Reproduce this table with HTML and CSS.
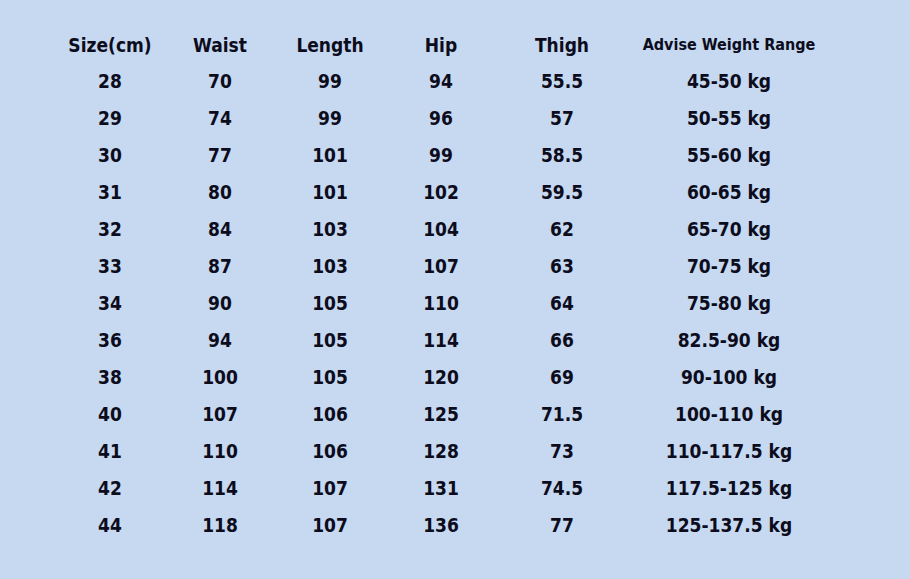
FILE: index.html
```html
<!DOCTYPE html>
<html lang="en">
<head>
<meta charset="utf-8">
<title>Size Chart</title>
<link rel="stylesheet" href="styles.css">
</head>
<body>
<div class="chart">
  <div class="row head">
    <div>Size(cm)</div><div>Waist</div><div>Length</div><div>Hip</div><div>Thigh</div><div class="small">Advise Weight Range</div>
  </div>
  <div class="row"><div>28</div><div>70</div><div>99</div><div>94</div><div>55.5</div><div>45-50 kg</div></div>
  <div class="row"><div>29</div><div>74</div><div>99</div><div>96</div><div>57</div><div>50-55 kg</div></div>
  <div class="row"><div>30</div><div>77</div><div>101</div><div>99</div><div>58.5</div><div>55-60 kg</div></div>
  <div class="row"><div>31</div><div>80</div><div>101</div><div>102</div><div>59.5</div><div>60-65 kg</div></div>
  <div class="row"><div>32</div><div>84</div><div>103</div><div>104</div><div>62</div><div>65-70 kg</div></div>
  <div class="row"><div>33</div><div>87</div><div>103</div><div>107</div><div>63</div><div>70-75 kg</div></div>
  <div class="row"><div>34</div><div>90</div><div>105</div><div>110</div><div>64</div><div>75-80 kg</div></div>
  <div class="row"><div>36</div><div>94</div><div>105</div><div>114</div><div>66</div><div>82.5-90 kg</div></div>
  <div class="row"><div>38</div><div>100</div><div>105</div><div>120</div><div>69</div><div>90-100 kg</div></div>
  <div class="row"><div>40</div><div>107</div><div>106</div><div>125</div><div>71.5</div><div>100-110 kg</div></div>
  <div class="row"><div>41</div><div>110</div><div>106</div><div>128</div><div>73</div><div>110-117.5 kg</div></div>
  <div class="row"><div>42</div><div>114</div><div>107</div><div>131</div><div>74.5</div><div>117.5-125 kg</div></div>
  <div class="row"><div>44</div><div>118</div><div>107</div><div>136</div><div>77</div><div>125-137.5 kg</div></div>
</div>
</body>
</html>
```
FILE: styles.css
```css
html, body {
  margin: 0;
  padding: 0;
}
body {
  width: 910px;
  height: 579px;
  background: #c6d9f1;
  color: #0c0c1c;
  font-family: "DejaVu Sans Condensed", "DejaVu Sans", sans-serif;
  font-weight: bold;
  font-size: 19px;
  overflow: hidden;
}
.chart {
  padding: 27px 0 0 55px;
}
.row {
  display: grid;
  grid-template-columns: 110px 110px 110px 112px 130px 204px;
  height: 37px;
  align-items: center;
  text-align: center;
  line-height: 37px;
  white-space: nowrap;
}
.row.head {
  height: 36px;
  line-height: 36px;
}
.small {
  font-size: 16px;
}
```
